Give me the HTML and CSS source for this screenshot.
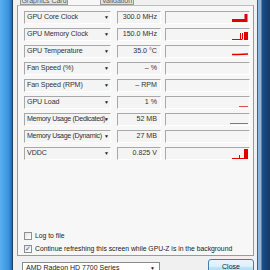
FILE: index.html
```html
<!DOCTYPE html>
<html lang="en">
<head>
    <meta charset="UTF-8">
    <title>GPU-Z Sensors</title>
    <link rel="stylesheet" href="styles.css">
</head>
<body>
    <div class="frame-left"></div>
    <div class="window">
        <div class="tabs">
            <div class="tab">Graphics Card</div>
            <div class="tab active">Sensors</div>
            <div class="tab">Validation</div>
        </div>
        <div class="panel">
            <div class="sensor">
                <div class="sensor-name">GPU Core Clock<span class="arrow">&#9660;</span></div>
                <div class="sensor-value">300.0 MHz</div>
                <div class="sensor-graph">
                    <svg width="83" height="11" viewBox="0 0 83 11"><path d="M66 8.5H80M80 2V10" stroke="#e00000" stroke-width="3" fill="none"/></svg>
                </div>
            </div>
            <div class="sensor">
                <div class="sensor-name">GPU Memory Clock<span class="arrow">&#9660;</span></div>
                <div class="sensor-value">150.0 MHz</div>
                <div class="sensor-graph">
                    <svg width="83" height="11" viewBox="0 0 83 11"><path d="M66 10.5H76M74.5 4V10.5M76.5 4V10.5" stroke="#e00000" stroke-width="1" fill="none"/><rect x="78" y="3" width="4" height="8" fill="#e00000"/></svg>
                </div>
            </div>
            <div class="sensor">
                <div class="sensor-name">GPU Temperature<span class="arrow">&#9660;</span></div>
                <div class="sensor-value">35.0 &deg;C</div>
                <div class="sensor-graph">
                    <svg width="83" height="11" viewBox="0 0 83 11"><path d="M66 8.5L72 8.5L82 8" stroke="#e00000" stroke-width="1.5" fill="none"/></svg>
                </div>
            </div>
            <div class="sensor">
                <div class="sensor-name">Fan Speed (%)<span class="arrow">&#9660;</span></div>
                <div class="sensor-value">&ndash; %</div>
                <div class="sensor-graph"></div>
            </div>
            <div class="sensor">
                <div class="sensor-name">Fan Speed (RPM)<span class="arrow">&#9660;</span></div>
                <div class="sensor-value">&ndash; RPM</div>
                <div class="sensor-graph"></div>
            </div>
            <div class="sensor">
                <div class="sensor-name">GPU Load<span class="arrow">&#9660;</span></div>
                <div class="sensor-value">1 %</div>
                <div class="sensor-graph">
                    <svg width="83" height="11" viewBox="0 0 83 11"><path d="M73 9.5H82" stroke="#e05050" stroke-width="1" fill="none"/></svg>
                </div>
            </div>
            <div class="sensor">
                <div class="sensor-name sensor-name--long">Memory Usage (Dedicated)<span class="arrow">&#9660;</span></div>
                <div class="sensor-value">52 MB</div>
                <div class="sensor-graph">
                    <svg width="83" height="11" viewBox="0 0 83 11"><path d="M64 9.5H82" stroke="#e05050" stroke-width="1" fill="none"/></svg>
                </div>
            </div>
            <div class="sensor">
                <div class="sensor-name sensor-name--long">Memory Usage (Dynamic)<span class="arrow">&#9660;</span></div>
                <div class="sensor-value">27 MB</div>
                <div class="sensor-graph"></div>
            </div>
            <div class="sensor">
                <div class="sensor-name">VDDC<span class="arrow">&#9660;</span></div>
                <div class="sensor-value">0.825 V</div>
                <div class="sensor-graph">
                    <svg width="83" height="11" viewBox="0 0 83 11"><path d="M66 10.5H78M73.5 7V10.5" stroke="#e00000" stroke-width="1" fill="none"/><rect x="78" y="1" width="4" height="10" fill="#e00000"/></svg>
                </div>
            </div>

            <div class="options">
                <label class="check"><span class="box"></span>Log to file</label>
                <label class="check"><span class="box checked">&#10003;</span>Continue refreshing this screen while GPU-Z is in the background</label>
            </div>
        </div>
        <div class="footer">
            <div class="card-select">AMD Radeon HD 7700 Series<span class="arrow">&#9660;</span></div>
            <button class="close-btn">Close</button>
        </div>
    </div>
    <div class="frame-right"></div>
</body>
</html>
```

FILE: styles.css
```css
body {
    margin: 0;
    width: 270px;
    height: 270px;
    overflow: hidden;
    display: flex;
    font-family: "Liberation Sans", Arial, sans-serif;
    font-size: 7.1px;
    color: #222;
    background: #f0f0f0;
}

.frame-left {
    width: 12px;
    flex-shrink: 0;
    background: linear-gradient(to right, #5aaef0, #3b93e0 70%, #2369a8);
    border-right: 1px solid #1c3f66;
}

.frame-right {
    width: 12px;
    flex-shrink: 0;
    border-left: 1px solid #3d5f80;
    background: linear-gradient(to right, #8fb6d8 0, #8fb6d8 3px, #1c4f86 4px, #123a6a);
}

.window {
    flex: 1;
    min-width: 0;
    display: flex;
    flex-direction: column;
    padding: 0 3px 0 4px;
    background: #f0f0f0;
}

.tabs {
    display: flex;
    flex-shrink: 0;
    height: 5px;
    padding-left: 3px;
    overflow: hidden;
}

.tab {
    width: 48px;
    height: 5px;
    line-height: 2px;
    text-align: center;
    font-size: 7px;
    color: #555;
    background: linear-gradient(#eaeaea, #dcdcdc);
    border: 1px solid #999;
    border-top: none;
    overflow: hidden;
    box-sizing: border-box;
}

.tab.active {
    width: 32px;
    color: transparent;
    background: #f7f7f7;
    border: 1px solid #f7f7f7;
}

.tab:last-child {
    width: 34px;
}

.panel {
    height: 251px;
    flex-shrink: 0;
    box-sizing: border-box;
    background: #f7f7f7;
    border: 1px solid #9a9a9a;
    border-top-color: #bdbdbd;
    padding: 5px 2px 0 6px;
    display: flex;
    flex-direction: column;
    gap: 4px;
}

.sensor {
    display: flex;
    align-items: center;
    height: 13px;
}

.sensor-name,
.sensor-value,
.sensor-graph {
    height: 13px;
    box-sizing: border-box;
    border: 1px solid #fff;
    border-top-color: #a8a8a8;
    border-left-color: #a8a8a8;
    background: #f4f4f4;
    white-space: nowrap;
    overflow: hidden;
    line-height: 11px;
}

.sensor-name {
    width: 87px;
    padding-left: 2px;
    position: relative;
    color: #333;
    letter-spacing: -0.1px;
}

.sensor-name--long {
    letter-spacing: -0.35px;
}

.sensor-name .arrow {
    position: absolute;
    right: 1px;
    top: 0;
    font-size: 5px;
    letter-spacing: 0;
    color: #222;
}

.sensor-value {
    width: 44px;
    margin-left: 6px;
    text-align: right;
    padding-right: 3px;
    color: #333;
}

.sensor-graph {
    width: 85px;
    margin-left: 4px;
    background: #f5f5f5;
}

.sensor-graph svg {
    display: block;
}

.options {
    margin-top: auto;
    padding-bottom: 1px;
    display: flex;
    flex-direction: column;
    gap: 2px;
    font-size: 6.8px;
    color: #222;
}

.check {
    display: flex;
    align-items: center;
    height: 11px;
    gap: 3px;
    white-space: nowrap;
}

.box {
    width: 8px;
    height: 8px;
    box-sizing: border-box;
    border: 1px solid #8e8f8f;
    background: linear-gradient(135deg, #e4e4e4, #fff);
    font-size: 7px;
    line-height: 6px;
    text-align: center;
    color: #4a5f97;
}

.footer {
    display: flex;
    flex-shrink: 0;
    justify-content: space-between;
    align-items: flex-start;
    padding: 6px 0 0 5px;
}

.card-select {
    width: 138px;
    height: 12px;
    box-sizing: border-box;
    border: 1px solid #8a8a8a;
    background: #fff;
    font-size: 7px;
    line-height: 10px;
    padding-left: 3px;
    position: relative;
}

.card-select .arrow {
    position: absolute;
    right: 4px;
    top: 0;
    font-size: 5px;
}

.close-btn {
    width: 46px;
    height: 15px;
    margin-top: -3px;
    padding: 0;
    font-family: "Liberation Sans", Arial, sans-serif;
    font-size: 7px;
    color: #222;
    border: 1px solid #3c7fb1;
    border-radius: 3px;
    background: linear-gradient(#eaf6fd, #d9f0fc 50%, #bee6fd 51%, #a7d9f5);
}
```
